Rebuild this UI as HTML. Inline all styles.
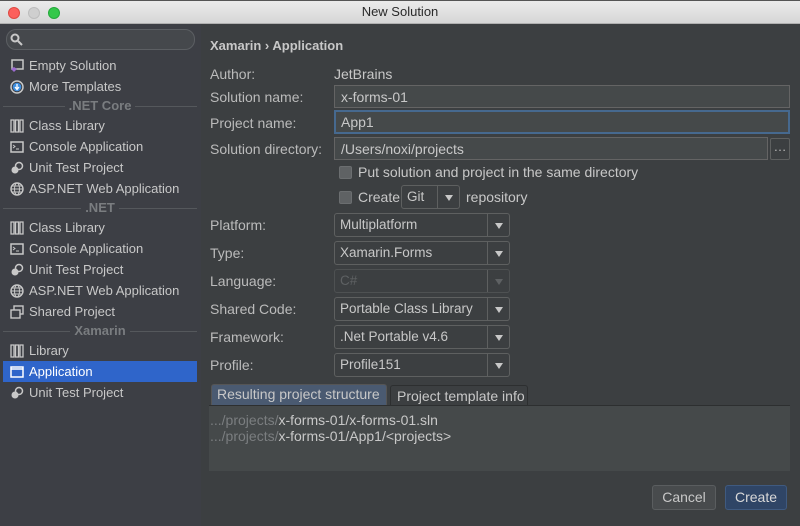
<!DOCTYPE html>
<html><head><style>
*{margin:0;padding:0;box-sizing:border-box}
body{width:800px;height:526px;background:#3c3f41;font-family:"Liberation Sans",sans-serif;font-size:14px;color:#bbbbbb;position:relative;overflow:hidden}
.a{position:absolute;white-space:nowrap}
#title{left:0;top:0;width:800px;height:24px;background:linear-gradient(#ebebeb,#d6d6d6);border-top:1px solid #555;border-bottom:1px solid #b0b0b0;color:#2a2a2a;text-align:center;line-height:22px;font-size:13px}
.dot{position:absolute;top:6px;width:12px;height:12px;border-radius:50%}
#side{left:0;top:24px;width:201px;height:502px;background:#3d3f45}
.it{position:absolute;left:3px;width:194px;height:21px;line-height:21px;padding-left:26px;color:#c8c8c8;font-size:13px}
.it svg{position:absolute;left:7px;top:4px}
.sel{background:#2f65ca;color:#fff}
.hdr{position:absolute;left:3px;width:194px;height:20px;line-height:20px;text-align:center;color:#7a7d80;font-weight:bold;font-size:13px}
.hdr:before{content:"";position:absolute;left:0;right:0;top:10px;border-top:1px solid #55585c}
.hdr span{position:relative;background:#3d3f45;padding:0 4px}
.lb{position:absolute;left:210px;color:#bbbbbb}
.in{position:absolute;background:#45494a;border:1px solid #646464;padding-left:6px;color:#c8c8c8;line-height:22px}
.dd{position:absolute;left:334px;width:176px;height:24px;border:1px solid #5e6060;border-radius:3px;background:#3c3f41;padding-left:5px;line-height:22px;color:#c8c8c8;font-size:13.5px}
.dd:after{content:"";position:absolute;right:0;top:0;width:21px;height:22px;border-left:1px solid #5e6060}
.dd i{position:absolute;right:6px;top:9px;border-left:4.5px solid transparent;border-right:4.5px solid transparent;border-top:6px solid #c8c8c8}
.cb{position:absolute;width:13px;height:13px;background:#5f6264;border:1px solid #6b6e70;border-radius:2px}
.btn{position:absolute;top:485px;height:25px;border-radius:3px;line-height:23px;text-align:center;color:#c8c8c8}
</style></head><body>
<div class="a" id="title">New Solution
<span class="dot" style="left:8px;background:#fc605c;border:1px solid #de4a43"></span>
<span class="dot" style="left:28px;background:#cfcfcf;border:1px solid #bdbdbd"></span>
<span class="dot" style="left:48px;background:#34c84a;border:1px solid #24a93a"></span></div>
<div class="a" id="side"></div>
<div class="a" style="left:6px;top:29px;width:189px;height:21px;border:1px solid #5c5f63;border-radius:10px;background:#45484c"></div>
<svg class="a" style="left:10px;top:33px" width="13" height="13"><circle cx="5" cy="5" r="3.5" fill="none" stroke="#c8c8c8" stroke-width="2"/><path d="M8 8l4 4" stroke="#c8c8c8" stroke-width="2"/></svg>

<div class="it" style="top:55px"><svg width="14" height="14"><rect x="2" y="1" width="11" height="9" fill="none" stroke="#c8c8c8" stroke-width="1.5"/><path d="M1 10l3 3l3-3l-3-2z" fill="#9b6bd0"/></svg>Empty Solution</div>
<div class="it" style="top:76px"><svg width="14" height="14"><circle cx="7" cy="7" r="6" fill="none" stroke="#c8c8c8" stroke-width="1.5"/><circle cx="7" cy="7" r="4.3" fill="#3d8ee0"/><path d="M7 4v5M5 7l2 2.5l2-2.5" stroke="#fff" stroke-width="1.3" fill="none"/></svg>More Templates</div>
<div class="hdr" style="top:96px"><span>.NET Core</span></div>
<div class="it" style="top:115px"><svg width="14" height="14"><path d="M1 1h3v12H1zM5.5 1h3v12h-3zM10 1h3v12h-3z" fill="none" stroke="#c8c8c8" stroke-width="1.3"/></svg>Class Library</div>
<div class="it" style="top:136px"><svg width="14" height="14"><rect x="1" y="2" width="12" height="10" fill="none" stroke="#c8c8c8" stroke-width="1.5"/><path d="M3 5l2 1.5L3 8M6 9h3" stroke="#c8c8c8" fill="none"/></svg>Console Application</div>
<div class="it" style="top:157px"><svg width="14" height="14"><circle cx="5" cy="9" r="3.5" fill="#c8c8c8"/><circle cx="9" cy="5" r="3.5" fill="none" stroke="#c8c8c8" stroke-width="1.5"/></svg>Unit Test Project</div>
<div class="it" style="top:178px"><svg width="14" height="14"><circle cx="7" cy="7" r="6" fill="none" stroke="#c8c8c8" stroke-width="1.4"/><ellipse cx="7" cy="7" rx="2.5" ry="6" fill="none" stroke="#c8c8c8"/><path d="M1 7h12M2 4h10M2 10h10" stroke="#c8c8c8"/></svg>ASP.NET Web Application</div>
<div class="hdr" style="top:198px"><span>.NET</span></div>
<div class="it" style="top:217px"><svg width="14" height="14"><path d="M1 1h3v12H1zM5.5 1h3v12h-3zM10 1h3v12h-3z" fill="none" stroke="#c8c8c8" stroke-width="1.3"/></svg>Class Library</div>
<div class="it" style="top:238px"><svg width="14" height="14"><rect x="1" y="2" width="12" height="10" fill="none" stroke="#c8c8c8" stroke-width="1.5"/><path d="M3 5l2 1.5L3 8M6 9h3" stroke="#c8c8c8" fill="none"/></svg>Console Application</div>
<div class="it" style="top:259px"><svg width="14" height="14"><circle cx="5" cy="9" r="3.5" fill="#c8c8c8"/><circle cx="9" cy="5" r="3.5" fill="none" stroke="#c8c8c8" stroke-width="1.5"/></svg>Unit Test Project</div>
<div class="it" style="top:280px"><svg width="14" height="14"><circle cx="7" cy="7" r="6" fill="none" stroke="#c8c8c8" stroke-width="1.4"/><ellipse cx="7" cy="7" rx="2.5" ry="6" fill="none" stroke="#c8c8c8"/><path d="M1 7h12M2 4h10M2 10h10" stroke="#c8c8c8"/></svg>ASP.NET Web Application</div>
<div class="it" style="top:301px"><svg width="14" height="14"><rect x="4" y="1" width="9" height="8" fill="none" stroke="#c8c8c8" stroke-width="1.4"/><rect x="1" y="5" width="9" height="8" fill="#3d3f45" stroke="#c8c8c8" stroke-width="1.4"/></svg>Shared Project</div>
<div class="hdr" style="top:321px"><span>Xamarin</span></div>
<div class="it" style="top:340px"><svg width="14" height="14"><path d="M1 1h3v12H1zM5.5 1h3v12h-3zM10 1h3v12h-3z" fill="none" stroke="#c8c8c8" stroke-width="1.3"/></svg>Library</div>
<div class="it sel" style="top:361px"><svg width="14" height="14"><rect x="1" y="2" width="12" height="10" fill="none" stroke="#fff" stroke-width="1.5"/><path d="M1 4h12" stroke="#fff" stroke-width="1.5"/></svg>Application</div>
<div class="it" style="top:382px"><svg width="14" height="14"><circle cx="5" cy="9" r="3.5" fill="#c8c8c8"/><circle cx="9" cy="5" r="3.5" fill="none" stroke="#c8c8c8" stroke-width="1.5"/></svg>Unit Test Project</div>

<div class="a" style="left:210px;top:38px;font-weight:bold;color:#c8c8c8;font-size:13px">Xamarin › Application</div>
<div class="lb" style="top:66px">Author:</div><div class="a" style="left:334px;top:66px;color:#c8c8c8">JetBrains</div>
<div class="lb" style="top:89px">Solution name:</div>
<div class="in" style="left:334px;top:85px;width:456px;height:23px">x-forms-01</div>
<div class="lb" style="top:115px">Project name:</div>
<div class="in" style="left:334px;top:110px;width:456px;height:24px;border:2px solid #46698f;padding-left:5px;line-height:20px">App1</div>
<div class="lb" style="top:141px">Solution directory:</div>
<div class="in" style="left:334px;top:137px;width:434px;height:23px">/Users/noxi/projects</div>
<div class="a" style="left:770px;top:138px;width:20px;height:22px;border:1px solid #5e6060;border-radius:2px;text-align:center;line-height:16px;font-size:13px">…</div>
<div class="cb" style="left:339px;top:166px"></div>
<div class="a" style="left:358px;top:164px;color:#c8c8c8">Put solution and project in the same directory</div>
<div class="cb" style="left:339px;top:191px"></div>
<div class="a" style="left:358px;top:189px;color:#c8c8c8">Create</div>
<div class="dd" style="left:401px;top:185px;width:59px">Git<i></i></div>
<div class="a" style="left:466px;top:189px;color:#c8c8c8">repository</div>

<div class="lb" style="top:217px">Platform:</div><div class="dd" style="top:213px">Multiplatform<i></i></div>
<div class="lb" style="top:245px">Type:</div><div class="dd" style="top:241px">Xamarin.Forms<i></i></div>
<div class="lb" style="top:273px">Language:</div><div class="dd" style="top:269px;color:#5e6163;border-color:#4e5152">C#<i style="border-top-color:#5e6163"></i></div>
<div class="lb" style="top:301px">Shared Code:</div><div class="dd" style="top:297px">Portable Class Library<i></i></div>
<div class="lb" style="top:329px">Framework:</div><div class="dd" style="top:325px">.Net Portable v4.6<i></i></div>
<div class="lb" style="top:357px">Profile:</div><div class="dd" style="top:353px">Profile151<i></i></div>

<div class="a" style="left:211px;top:384px;width:176px;height:22px;background:#4a5a71;border:1px solid #555;border-bottom:none;border-radius:3px 3px 0 0;line-height:19px;padding-left:5px;color:#c8c8c8">Resulting project structure</div>
<div class="a" style="left:390px;top:385px;width:138px;height:21px;border:1px solid #2d2f30;border-bottom:none;border-radius:3px 3px 0 0;line-height:21px;padding-left:6px;color:#c8c8c8">Project template info</div>
<div class="a" style="left:209px;top:405px;width:581px;height:1px;background:#2d2f30"></div>
<div class="a" style="left:209px;top:406px;width:581px;height:65px;background:#45494a"></div>
<div class="a" style="left:210px;top:412px;color:#c8c8c8"><span style="color:#7b7e80">.../projects/</span>x-forms-01/x-forms-01.sln</div>
<div class="a" style="left:210px;top:428px;color:#c8c8c8"><span style="color:#7b7e80">.../projects/</span>x-forms-01/App1/&lt;projects&gt;</div>

<div class="btn" style="left:652px;width:64px;background:#484b4d;border:1px solid #5a5d5f">Cancel</div>
<div class="btn" style="left:725px;width:62px;background:#2f4566;border:1px solid #3f5a80;color:#d8d8d8">Create</div>
</body></html>
